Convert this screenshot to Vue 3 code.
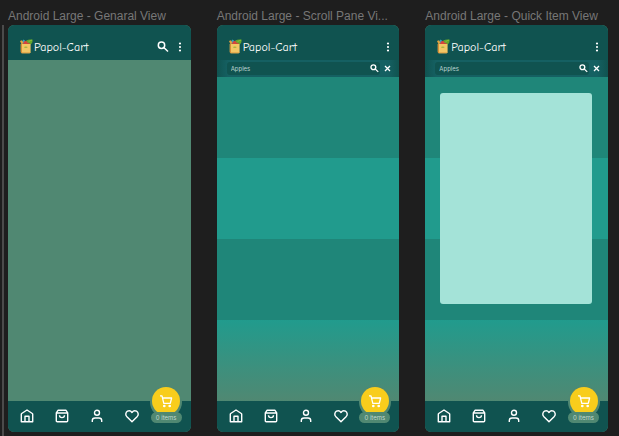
<script setup>
import { ref } from 'vue'

const screens = ref([
  { id: 'general', title: 'Android Large - Genaral View', search: false, modal: false, query: '' },
  { id: 'scroll', title: 'Android Large - Scroll Pane Vi...', search: true, modal: false, query: 'Apples' },
  { id: 'quick', title: 'Android Large - Quick Item View', search: true, modal: true, query: 'Apples' },
])
</script>

<template>
  <div class="canvas">
    <div class="rail"></div>
    <div class="frames">
      <section v-for="s in screens" :key="s.id" class="frame">
        <h2 class="frame-title">{{ s.title }}</h2>
        <div class="phone">
          <header class="topbar">
            <svg class="logo" viewBox="0 0 14 15">
              <path d="M2 4 L4.500 .6 L6.500 2 L6 5 Z" fill="#35a3c4" />
              <path d="M1 2 l2 -.8 l1.500 3 l-2 1z" fill="#e2a33d" />
              <path d="M6.500 3.500 C6.500 .5 10 .2 13.500 .6 C13.900 3 12.900 5.800 9.500 5.800 Z" fill="#63a52c" />
              <path d="M9 3.500 C10 2 11.500 1.500 13 1.200" stroke="#8fc63f" stroke-width=".8" fill="none" />
              <circle cx="6.500" cy="4.200" r="2.200" fill="#d8433b" />
              <circle cx="9.500" cy="4.900" r="1.200" fill="#c9473a" />
              <path d="M1.800 5 H11.600 V13 Q11.600 14.200 10.400 14.200 H3 Q1.800 14.200 1.800 13 Z" fill="#f3c765" />
              <path d="M1.800 5 H3 V14.200 Q1.800 14.200 1.800 13 Z" fill="#d98e37" />
              <path d="M3 13.200 H11.600 Q11.500 14.200 10.400 14.200 H3 Z" fill="#e3a548" />
              <ellipse cx="6.800" cy="8.200" rx="1.800" ry=".8" fill="#a8b43c" />
            </svg>
            <span class="brand">Papol-Cart</span>
            <button v-if="!s.search" class="icon-btn" aria-label="Search">
              <svg class="lens" viewBox="0 0 12 12">
                <circle cx="4.500" cy="4.300" r="3.200" />
                <path d="M6.800 6.500 L11 10.500" />
              </svg>
            </button>
            <button class="icon-btn" aria-label="More">
              <svg class="dots" viewBox="0 0 4 10">
                <circle cx="2" cy="1.500" r="1.100" />
                <circle cx="2" cy="5" r="1.100" />
                <circle cx="2" cy="8.500" r="1.100" />
              </svg>
            </button>
          </header>

          <form v-if="s.search" class="searchbar" @submit.prevent>
            <div class="field">
              <input v-model="s.query" type="text" aria-label="Search items" />
              <button class="icon-btn" aria-label="Search">
                <svg class="lens small" viewBox="0 0 12 12">
                  <circle cx="4.500" cy="4.300" r="3.200" />
                  <path d="M6.800 6.500 L11 10.500" />
                </svg>
              </button>
            </div>
            <button class="icon-btn" type="button" aria-label="Clear" @click="s.query = ''">
              <svg class="cross" viewBox="0 0 7 7"><path d="M1 1 L6 6 M6 1 L1 6" /></svg>
            </button>
          </form>

          <main class="content">
            <template v-if="s.search">
              <div class="band dark"></div>
              <div class="band light"></div>
              <div class="band dark"></div>
              <div class="band fade"></div>
            </template>
            <div v-if="s.modal" class="quick-item"></div>
          </main>

          <nav class="tabs">
            <a href="#home" aria-label="Home">
              <svg viewBox="0 0 14 14">
                <path d="M1.300 5.200 Q1.300 4.800 1.700 4.500 L7 1 L12.300 4.500 Q12.700 4.800 12.700 5.200 V12.700 H1.300 Z" />
                <path d="M5 12.500 V7.300 H9 V12.500" />
              </svg>
            </a>
            <a href="#bag" aria-label="Shop">
              <svg viewBox="0 0 14 14">
                <path d="M1.300 3.800 L3 1.300 H11 L12.700 3.800 V11.700 Q12.700 12.700 11.700 12.700 H2.300 Q1.300 12.700 1.300 11.700 Z M1.300 4 H12.700" />
                <path d="M4.500 6.300 C4.500 9.400 9.500 9.400 9.500 6.300" />
              </svg>
            </a>
            <a href="#profile" aria-label="Profile">
              <svg viewBox="0 0 14 14">
                <circle cx="7" cy="3.800" r="2.500" />
                <path d="M2.300 13 V11.500 Q2.300 9 5 9 H9 Q11.700 9 11.700 11.500 V13" />
              </svg>
            </a>
            <a href="#favorites" aria-label="Favorites">
              <svg viewBox="0 0 14 14">
                <path d="M7 12.800 L1.700 7.400 C.2 5.700 .7 3.200 2.500 2.200 C4.200 1.300 5.900 1.900 7 3.500 C8.100 1.900 9.800 1.300 11.500 2.200 C13.300 3.200 13.800 5.700 12.300 7.400 Z" />
              </svg>
            </a>
            <div class="cart">
              <button class="cart-btn" aria-label="Cart">
                <svg viewBox="0 0 14 14">
                  <path d="M1 1.800 H3 L4.800 9.300 H11.300 L12.600 4 H3.600" />
                  <circle cx="5.300" cy="12" r=".7" />
                  <circle cx="10.700" cy="12" r=".7" />
                </svg>
              </button>
              <span class="count">0 items</span>
            </div>
          </nav>
        </div>
      </section>
    </div>
  </div>
</template>

<style>
body {
  background: #1e1e1e;
}
</style>

<style scoped>
.canvas {
  display: flex;
  min-height: 100vh;
  box-sizing: border-box;
  background: #1e1e1e;
  font-family: Inter, "Liberation Sans", sans-serif;
}
.rail {
  width: 2px;
  margin: 25px 4px 0 2px;
  background: #4b4b4b;
}
.frames {
  flex: 1;
  display: grid;
  grid-template-columns: repeat(3, minmax(0, 1fr));
  gap: 26px;
  padding: 8px 11px 4px 0;
}
.frame {
  display: flex;
  flex-direction: column;
}
.frame-title {
  margin: 0;
  font-family: "Liberation Sans", Arial, sans-serif;
  font-size: 12px;
  line-height: 17px;
  font-weight: 400;
  color: #777;
  white-space: nowrap;
}
.phone {
  flex: 1;
  display: flex;
  flex-direction: column;
  border-radius: 6px;
  overflow: hidden;
  background: #508872;
}
.icon-btn {
  display: flex;
  padding: 0;
  border: 0;
  background: none;
  color: #fff;
}
.topbar {
  display: flex;
  align-items: center;
  height: 35px;
  box-sizing: border-box;
  padding: 8px 9px 0 11px;
  background: #105350;
}
.logo {
  width: 14px;
  height: 15px;
}
.brand {
  flex: 1;
  margin-left: 1px;
  font-family: "Comic Neue", "Comic Sans MS", Lato, cursive;
  font-size: 12px;
  line-height: 16px;
  color: #fff;
}
.lens {
  width: 12px;
  height: 12px;
  fill: none;
  stroke: currentColor;
  stroke-width: 1.5;
}
.lens.small {
  width: 9px;
  height: 9px;
  stroke-width: 1.8;
}
.dots {
  width: 4px;
  height: 10px;
  margin-left: 9px;
  fill: currentColor;
}
.searchbar {
  display: flex;
  align-items: center;
  gap: 4px;
  height: 17px;
  box-sizing: border-box;
  padding: 0 8px 0 10px;
  background: linear-gradient(90deg, #105350, #156062 6%, #156062 94%, #105350);
}
.field {
  flex: 1;
  display: flex;
  align-items: center;
  height: 13px;
  box-sizing: border-box;
  padding: 0 1px 0 4px;
  border-radius: 3px;
  background: #105350;
}
.field input {
  flex: 1;
  min-width: 0;
  padding: 0;
  border: 0;
  outline: 0;
  background: none;
  font-family: inherit;
  font-size: 6px;
  line-height: 8px;
  color: #bdd4d1;
}
.cross {
  width: 7px;
  height: 7px;
  fill: none;
  stroke: currentColor;
  stroke-width: 1.3;
}
.content {
  position: relative;
  flex: 1;
  display: flex;
  flex-direction: column;
}
.band {
  flex: 1;
}
.dark {
  background: #1f8679;
}
.light {
  background: #219b8d;
}
.fade {
  background: linear-gradient(#219b8d, #508872);
}
.quick-item {
  position: absolute;
  inset: 5% 9% 30% 8%;
  border-radius: 3px;
  background: #a4e3d8;
}
.tabs {
  position: relative;
  display: flex;
  align-items: center;
  gap: 21px;
  height: 31px;
  box-sizing: border-box;
  padding: 0 12px 2px;
  background: #105350;
}
.tabs a {
  display: flex;
  color: #fff;
}
.tabs a svg {
  width: 14px;
  height: 14px;
  fill: none;
  stroke: currentColor;
  stroke-width: 1.4;
  stroke-linejoin: round;
}
.cart {
  position: absolute;
  right: 9px;
  bottom: 9px;
  display: flex;
  flex-direction: column;
  align-items: center;
}
.cart-btn {
  display: flex;
  align-items: center;
  justify-content: center;
  width: 28px;
  height: 28px;
  padding: 0;
  border: 0;
  border-radius: 50%;
  background: #f8cd1c;
  box-shadow: 0 1px 0 2px #508872;
  color: #fff;
}
.cart-btn svg {
  width: 14px;
  height: 14px;
  fill: none;
  stroke: currentColor;
  stroke-width: 1.3;
  stroke-linejoin: round;
}
.count {
  position: relative;
  width: 31px;
  margin-top: -3px;
  border-radius: 6px;
  background: #508872;
  font-size: 6px;
  line-height: 11px;
  text-align: center;
  color: #c3d8cf;
}
</style>
